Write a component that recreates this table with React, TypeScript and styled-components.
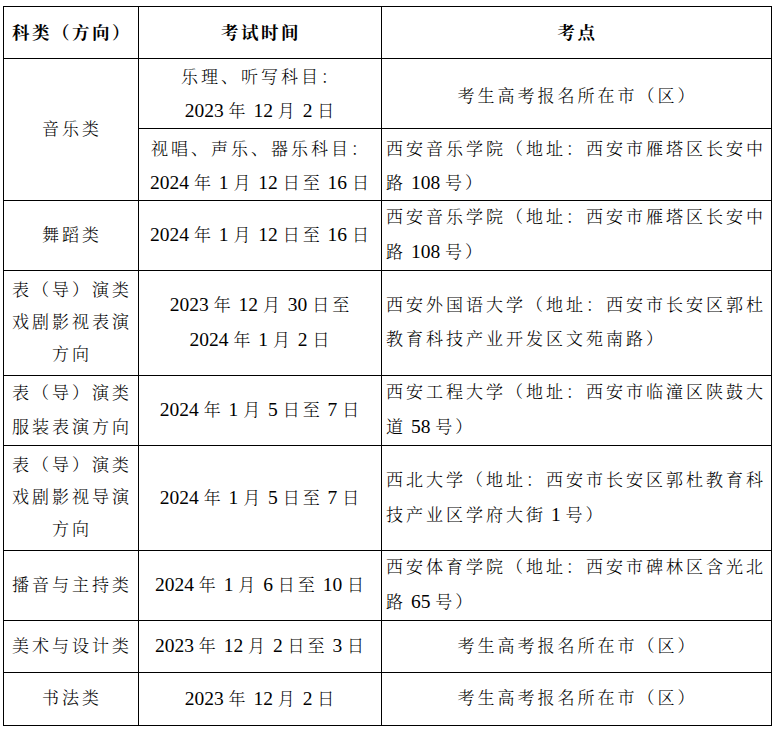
import React from "react";
import styled, { createGlobalStyle } from "styled-components";

const Global = createGlobalStyle`
  html, body { margin: 0; padding: 0; background: #fff; }
  body {
    font-family: "Liberation Serif", "Noto Serif CJK SC", "Noto Sans CJK SC", serif;
    color: #000;
  }
`;

const Page = styled.div`
  padding: 6px 0 0 3px;
  width: 776px;
  box-sizing: border-box;
`;

const Table = styled.table`
  border-collapse: collapse;
  table-layout: fixed;
  width: 768px;
`;

const Row = styled.tr<{ $h: number }>`
  height: ${(p) => p.$h}px;
`;

const Cell = styled.td<{ $align?: "left" | "center"; $lh?: number; $pt?: number }>`
  border: 1px solid #000;
  padding: ${(p) => p.$pt ?? 0}px 2px 0 4px;
  text-align: ${(p) => p.$align ?? "center"};
  vertical-align: middle;
  font-size: 17px;
  letter-spacing: 3px;
  font-weight: 300;
  line-height: ${(p) => p.$lh ?? 34}px;
  white-space: nowrap;
  overflow: hidden;
`;

const HeadCell = styled(Cell)`
  font-weight: 700;
  font-size: 17.5px;
  letter-spacing: 2.5px;
`;

const Num = styled.span`
  font-size: 19.5px;
  letter-spacing: 0;
  font-weight: 400;
`;

function Line({ text }: { text: string }) {
  const parts = text.split(/( ?[0-9]+ ?)/);
  return (
    <>
      {parts.map((p, i) =>
        /[0-9]/.test(p) ? <Num key={i}>{p}</Num> : <React.Fragment key={i}>{p}</React.Fragment>
      )}
    </>
  );
}

function Lines({ lines }: { lines: string[] }) {
  return (
    <>
      {lines.map((l, i) => (
        <React.Fragment key={i}>
          {i > 0 && <br />}
          <Line text={l} />
        </React.Fragment>
      ))}
    </>
  );
}

const LOCAL = "考生高考报名所在市（区）";

export default function App() {
  return (
    <Page>
      <Global />
      <Table>
        <colgroup>
          <col style={{ width: 135 }} />
          <col style={{ width: 243 }} />
          <col style={{ width: 390 }} />
        </colgroup>
        <tbody>
          <Row $h={52}>
            <HeadCell>科类（方向）</HeadCell>
            <HeadCell>考试时间</HeadCell>
            <HeadCell>考点</HeadCell>
          </Row>
          <Row $h={69}>
            <Cell rowSpan={2}>音乐类</Cell>
            <Cell $lh={33} $pt={2}>
              <Lines lines={["乐理、听写科目：", "2023 年 12 月 2 日"]} />
            </Cell>
            <Cell $pt={6}>{LOCAL}</Cell>
          </Row>
          <Row $h={72}>
            <Cell $lh={33} $pt={3}>
              <Lines lines={["视唱、声乐、器乐科目：", "2024 年 1 月 12 日至 16 日"]} />
            </Cell>
            <Cell $align="left" $lh={33} $pt={3}>
              <Lines lines={["西安音乐学院（地址：西安市雁塔区长安中", "路 108 号）"]} />
            </Cell>
          </Row>
          <Row $h={70}>
            <Cell>舞蹈类</Cell>
            <Cell>
              <Lines lines={["2024 年 1 月 12 日至 16 日"]} />
            </Cell>
            <Cell $align="left">
              <Lines lines={["西安音乐学院（地址：西安市雁塔区长安中", "路 108 号）"]} />
            </Cell>
          </Row>
          <Row $h={105}>
            <Cell $lh={32}>
              <Lines lines={["表（导）演类", "戏剧影视表演", "方向"]} />
            </Cell>
            <Cell>
              <Lines lines={["2023 年 12 月 30 日至", "2024 年 1 月 2 日"]} />
            </Cell>
            <Cell $align="left">
              <Lines lines={["西安外国语大学（地址：西安市长安区郭杜", "教育科技产业开发区文苑南路）"]} />
            </Cell>
          </Row>
          <Row $h={70}>
            <Cell>
              <Lines lines={["表（导）演类", "服装表演方向"]} />
            </Cell>
            <Cell>
              <Lines lines={["2024 年 1 月 5 日至 7 日"]} />
            </Cell>
            <Cell $align="left">
              <Lines lines={["西安工程大学（地址：西安市临潼区陕鼓大", "道 58 号）"]} />
            </Cell>
          </Row>
          <Row $h={105}>
            <Cell $lh={32}>
              <Lines lines={["表（导）演类", "戏剧影视导演", "方向"]} />
            </Cell>
            <Cell>
              <Lines lines={["2024 年 1 月 5 日至 7 日"]} />
            </Cell>
            <Cell $align="left">
              <Lines lines={["西北大学（地址：西安市长安区郭杜教育科", "技产业区学府大街 1 号）"]} />
            </Cell>
          </Row>
          <Row $h={70}>
            <Cell>播音与主持类</Cell>
            <Cell>
              <Lines lines={["2024 年 1 月 6 日至 10 日"]} />
            </Cell>
            <Cell $align="left">
              <Lines lines={["西安体育学院（地址：西安市碑林区含光北", "路 65 号）"]} />
            </Cell>
          </Row>
          <Row $h={52}>
            <Cell>美术与设计类</Cell>
            <Cell>
              <Lines lines={["2023 年 12 月 2 日至 3 日"]} />
            </Cell>
            <Cell>{LOCAL}</Cell>
          </Row>
          <Row $h={53}>
            <Cell>书法类</Cell>
            <Cell>
              <Lines lines={["2023 年 12 月 2 日"]} />
            </Cell>
            <Cell>{LOCAL}</Cell>
          </Row>
        </tbody>
      </Table>
    </Page>
  );
}
